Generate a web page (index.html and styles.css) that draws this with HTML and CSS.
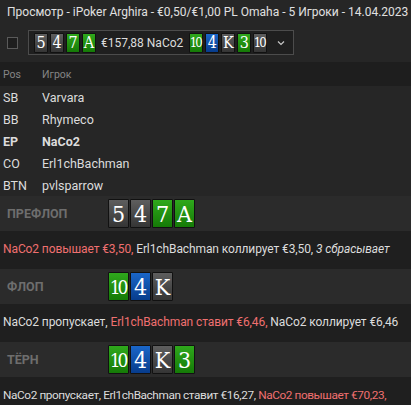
FILE: index.html
```html
<!DOCTYPE html>
<html>
<head>
<meta charset="utf-8">
<link rel="stylesheet" href="styles.css">
</head>
<body>
<div class="app">
  <div class="title">Просмотр - iPoker Arghira - €0,50/€1,00 PL Omaha - 5 Игроки - 14.04.2023 10:15</div>
  <div class="toolbar">
    <span class="check"></span>
    <div class="select">
      <div class="cards sm">
        <span class="card gray">5</span><span class="card gray">4</span><span class="card green">7</span><span class="card green">A</span>
      </div>
      <span class="sel-text">€157,88 NaCo2</span>
      <div class="cards sm">
        <span class="card green ten">10</span><span class="card blue">4</span><span class="card gray">K</span><span class="card green">3</span><span class="card gray ten">10</span>
      </div>
      <svg class="chev" width="8" height="6" viewBox="0 0 8 6"><path d="M1 1.5 L4 4.5 L7 1.5" fill="none" stroke="#c8c8c8" stroke-width="1.2"/></svg>
    </div>
  </div>
  <div class="thead"><span class="pos">Pos</span><span>Игрок</span></div>
  <div class="row"><span class="pos">SB</span><span>Varvara</span></div>
  <div class="row"><span class="pos">BB</span><span>Rhymeco</span></div>
  <div class="row hero"><span class="pos">EP</span><span>NaCo2</span></div>
  <div class="row"><span class="pos">CO</span><span>Erl1chBachman</span></div>
  <div class="row"><span class="pos">BTN</span><span>pvlsparrow</span></div>

  <div class="street">
    <span class="label">ПРЕФЛОП</span>
    <div class="cards lg">
      <span class="card gray">5</span><span class="card gray">4</span><span class="card green">7</span><span class="card green">A</span>
    </div>
  </div>
  <div class="actions"><span class="red">NaCo2 повышает €3,50,</span> Erl1chBachman коллирует €3,50, <i>3 сбрасывает</i></div>

  <div class="street">
    <span class="label">ФЛОП</span>
    <div class="cards lg">
      <span class="card green ten">10</span><span class="card blue">4</span><span class="card gray">K</span>
    </div>
  </div>
  <div class="actions">NaCo2 пропускает, <span class="red">Erl1chBachman ставит €6,46,</span> NaCo2 коллирует €6,46</div>

  <div class="street">
    <span class="label">ТЁРН</span>
    <div class="cards lg">
      <span class="card green ten">10</span><span class="card blue">4</span><span class="card gray">K</span><span class="card green">3</span>
    </div>
  </div>
  <div class="actions"><span class="line tight">NaCo2 пропускает, Erl1chBachman ставит €16,27, <span class="red">NaCo2 повышает €70,23,</span></span><span class="line">€88,08 ...</span></div>
</div>
</body>
</html>
```
FILE: styles.css
```css
* { box-sizing: border-box; }
html, body { margin: 0; padding: 0; }
body {
  background: #262626;
  color: #dcdcdc;
  font-family: Roboto, "Noto Sans", sans-serif;
  font-size: 12px;
  width: 411px;
  height: 405px;
  overflow: hidden;
}
.app { display: flex; flex-direction: column; }
.title {
  height: 25px;
  line-height: 25px;
  padding-left: 7px;
  white-space: nowrap;
  overflow: hidden;
  font-size: 12px;
  color: #e0e0e0;
}
.toolbar {
  height: 37px;
  display: flex;
  align-items: center;
  padding-left: 7px;
  gap: 10px;
  padding-bottom: 2px;
}
.check {
  width: 11px;
  height: 12px;
  border: 1px solid #5a5a5a;
  background: #1e1e1e;
}
.select {
  width: 266px;
  height: 25px;
  border: 1px solid #4c4c4c;
  background: #1f1f1f;
  display: flex;
  align-items: center;
  padding-left: 5px;
}
.sel-text { margin: 0 6px 0 5px; color: #dcdcdc; white-space: nowrap; }
.chev { margin-left: auto; margin-right: 8px; }
.cards { display: flex; }
.card {
  display: flex;
  align-items: center;
  justify-content: center;
  color: #fff;
  font-family: "DejaVu Serif Condensed", "DejaVu Serif", serif;
  font-stretch: condensed;
  font-weight: normal;
  border: 1px solid #111;
  border-radius: 1px;
}
.sm { gap: 2px; }
.sm .card { width: 14px; height: 20px; font-size: 16px; }
.lg { gap: 1px; }
.lg .card { width: 21px; height: 29px; font-size: 23px; }
.sm .ten { font-size: 13px; letter-spacing: -2px; }
.lg .ten { font-size: 19px; letter-spacing: -3px; }
.ten { padding-right: 2px; }
.gray { background: linear-gradient(#5e5e5e, #353535); }
.green { background: linear-gradient(#2fa81c, #157a07); }
.blue { background: linear-gradient(#1a66c8, #073c8c); }
.thead {
  height: 24px;
  display: flex;
  align-items: center;
  background: #1e1e1e;
  color: #858585;
  font-size: 10.5px;
  padding-left: 3px;
}
.pos { width: 39px; }
.row {
  height: 22px;
  display: flex;
  align-items: center;
  padding-left: 3px;
  font-size: 12.5px;
}
.hero { font-weight: bold; }
.street {
  height: 35px;
  display: flex;
  align-items: center;
  background: #2b2b2b;
  padding-left: 7px;
}
.label {
  width: 101px;
  font-weight: bold;
  color: #6e6e6e;
  font-size: 12.5px;
}
.actions {
  height: 38px;
  padding: 10px 3px 0;
  line-height: 16px;
  background: #1f1f1f;
  letter-spacing: -0.1px;
}
.line { display: block; white-space: nowrap; }
.tight { letter-spacing: -0.4px; font-size: 11.8px; }
.red { color: #f07070; }
```
